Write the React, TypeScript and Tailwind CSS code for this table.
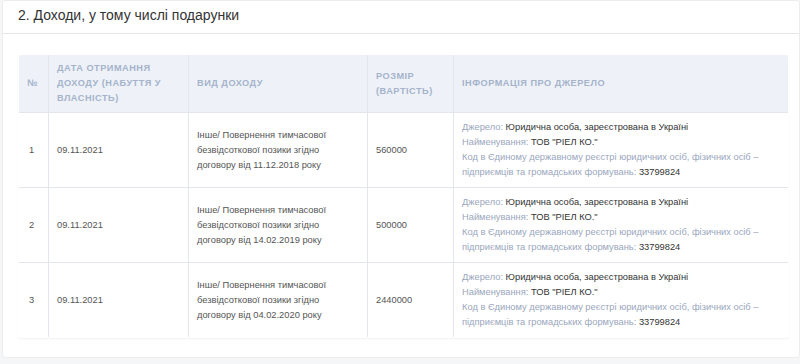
const rows = [
  { n: 1, date: "09.11.2021", kind: "Інше/ Повернення тимчасової безвідсоткової позики згідно договору від 11.12.2018 року", amount: "560000" },
  { n: 2, date: "09.11.2021", kind: "Інше/ Повернення тимчасової безвідсоткової позики згідно договору від 14.02.2019 року", amount: "500000" },
  { n: 3, date: "09.11.2021", kind: "Інше/ Повернення тимчасової безвідсоткової позики згідно договору від 04.02.2020 року", amount: "2440000" },
];

function SourceInfo() {
  return (
    <div className="leading-[15px] text-[#9aa6bd]">
      <div>
        Джерело: <span className="text-[#333]">Юридична особа, зареєстрована в Україні</span>
      </div>
      <div>
        Найменування: <span className="text-[#333]">ТОВ "РІЕЛ КО."</span>
      </div>
      <div>Код в Єдиному державному реєстрі юридичних осіб, фізичних осіб –</div>
      <div>
        підприємців та громадських формувань: <span className="text-[#333]">33799824</span>
      </div>
    </div>
  );
}

export default function App() {
  const th = "border-r border-[#e3e7ec] px-[8px] text-left align-middle font-bold uppercase tracking-[0.5px] text-[9.2px] leading-[15px] text-[#a5b3cb]";
  const td = "border-r border-[#e3e7ec] px-[8px] align-middle text-[9.3px] leading-[15px] text-[#555]";

  return (
    <div className="h-[364px] overflow-hidden bg-[#f5f6f8] pl-[2px] font-['Liberation_Sans',Arial,sans-serif]">
      <div className="h-[358px] rounded-[3px] border border-[#ececec] bg-white">
        <div className="flex h-[33px] items-center border-b border-[#e6e6e6] px-[15px] pb-[4px] text-[14px] text-[#333]">
          2. Доходи, у тому числі подарунки
        </div>
        <div className="pl-[15px] pr-[11px] pt-[20px]">
          <table className="w-[771px] table-fixed border-collapse overflow-hidden rounded-[3px] border border-[#e3e7ec] shadow-[0_1px_2px_rgba(0,0,0,0.06)]">
            <colgroup>
              <col className="w-[30px]" />
              <col className="w-[140px]" />
              <col className="w-[179px]" />
              <col className="w-[86px]" />
              <col />
            </colgroup>
            <thead>
              <tr className="h-[58px] bg-[#eef2f8]">
                <th className={th}>№</th>
                <th className={th}>Дата отримання доходу (набуття у власність)</th>
                <th className={th}>Вид доходу</th>
                <th className={th}>Розмір (вартість)</th>
                <th className={th + " border-r-0"}>Інформація про джерело</th>
              </tr>
            </thead>
            <tbody>
              {rows.map((r) => (
                <tr key={r.n} className="h-[75px] border-t border-[#e3e7ec]">
                  <td className={td + " pl-[10px]"}>{r.n}</td>
                  <td className={td}>{r.date}</td>
                  <td className={td + " pr-[26px]"}>{r.kind}</td>
                  <td className={td}>{r.amount}</td>
                  <td className={td + " border-r-0"}>
                    <SourceInfo />
                  </td>
                </tr>
              ))}
            </tbody>
          </table>
        </div>
      </div>
    </div>
  );
}
